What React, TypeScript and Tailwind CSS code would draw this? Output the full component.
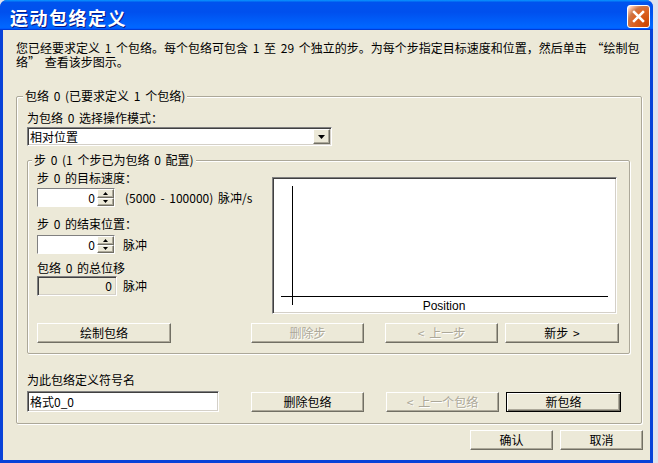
import clsx from 'clsx'

const sunken =
    'border border-t-[#808080] border-l-[#808080] border-b-white border-r-white shadow-[inset_1px_1px_0_#404040,inset_-1px_-1px_0_#d4d0c8]'
const raised =
    'bg-[#ece9d8] border border-t-white border-l-white border-b-[#716f64] border-r-[#716f64] shadow-[inset_-1px_-1px_0_#aca899]'

type BtnProps = { label: string; w: string; disabled?: boolean; isDefault?: boolean; className?: string }

const Btn = ({ label, w, disabled, isDefault, className }: BtnProps) => (
    <div
        className={clsx(
            'h-[20px] shrink-0 flex items-center justify-center leading-none',
            w,
            isDefault
                ? 'bg-[#ece9d8] border border-black shadow-[inset_1px_1px_0_#fff,inset_-1px_-1px_0_#716f64,inset_-2px_-2px_0_#aca899]'
                : raised,
            disabled && 'text-[#aca899] [text-shadow:1px_1px_0_#fff]',
            className
        )}
    >
        {label}
    </div>
)

const Arrow = ({ up }: { up?: boolean }) => (
    <svg width="5" height="3" viewBox="0 0 5 3">
        <path d={up ? 'M2.5 0 L5 3 L0 3 Z' : 'M0 0 L5 0 L2.5 3 Z'} fill="#000" />
    </svg>
)

const Spin = ({ value }: { value: string }) => (
    <div className={clsx('h-[19px] w-[78px] flex', sunken)}>
        <div className="flex-1 bg-white text-right pr-[2px] leading-[17px]">{value}</div>
        <div className="w-[17px] flex flex-col">
            <div className={clsx('flex-1 flex items-center justify-center', raised)}>
                <Arrow up />
            </div>
            <div className={clsx('flex-1 flex items-center justify-center', raised)}>
                <Arrow />
            </div>
        </div>
    </div>
)

const Chart = () => (
    <div className={clsx('w-[345px] h-[137px] mt-[6px] bg-white', sunken)}>
        <svg width="343" height="135" viewBox="0 0 343 135" shapeRendering="crispEdges">
            <line x1="19.5" y1="8" x2="19.5" y2="127" stroke="#000" strokeWidth="1" />
            <line x1="8" y1="118.5" x2="335" y2="118.5" stroke="#000" strokeWidth="1" />
            <text
                x="171"
                y="132"
                textAnchor="middle"
                fontSize="12"
                fontFamily="'Liberation Sans', Arial, sans-serif"
                fill="#000"
            >
                Position
            </text>
        </svg>
    </div>
)

const App = () => {
    return (
        <div className="w-[658px] h-[463px] overflow-hidden bg-[#dfe3ee] font-['Noto_Sans_CJK_SC',sans-serif] text-[12px] text-black [word-spacing:2px]">
            <div className="w-[653px] h-[463px] flex flex-col rounded-t-[7px] bg-[#0842d8] overflow-hidden">
                {/* title bar */}
                <div className="h-[30px] shrink-0 flex items-center pl-[10px] pr-[3px] bg-[linear-gradient(180deg,#0997ff_0%,#0053ee_8%,#0050ee_40%,#0066ff_88%,#0066ff_93%,#005bff_95%,#003dd7_96%,#003dd7_100%)]">
                    <span className="flex-1 text-white text-[18px] font-bold tracking-[1.5px] leading-none pt-[3px] [text-shadow:1px_1px_0_#0a1883]">
                        运动包络定义
                    </span>
                    <div className="w-[23px] h-[23px] mt-[2px] rounded-[3px] border border-white flex items-center justify-center bg-[radial-gradient(circle_at_90%_90%,#cc4600_0%,#dc6527_55%,#cd7546_70%,#ffccb2_90%,#fff_100%)]">
                        <svg width="13" height="13" viewBox="0 0 13 13">
                            <path d="M2 2 L11 11 M11 2 L2 11" stroke="#fff" strokeWidth="2.5" strokeLinecap="square" />
                        </svg>
                    </div>
                </div>

                {/* body */}
                <div className="flex-1 mx-[3px] mb-[3px] bg-[#ece9d8] flex flex-col pl-[13px] pr-[7px]">
                    <div className="mt-[11px] whitespace-nowrap">
                        <div className="leading-[14px]">
                            您已经要求定义 1 个包络。每个包络可包含 1 至 29 个独立的步。为每个步指定目标速度和位置，然后单击 “绘制包
                        </div>
                        <div className="leading-[14px]">络” 查看该步图示。</div>
                    </div>

                    <fieldset className="mt-[20px] w-[626px] h-[335px] p-0 min-w-0 border border-[#aca899] rounded-[2px] shadow-[inset_1px_1px_0_#fff,1px_1px_0_#fff]">
                        <legend className="ml-[6px] px-[2px] leading-[14px] bg-[#ece9d8]">包络 0 (已要求定义 1 个包络)</legend>
                        <div className="pl-[10px] flex flex-col">
                            <div className="mt-[8px] leading-[14px]">为包络 0 选择操作模式：</div>
                            <div className={clsx('mt-[2px] h-[19px] w-[305px] flex items-center bg-white pr-[1px]', sunken)}>
                                <span className="flex-1 pl-[2px] leading-none">相对位置</span>
                                <div className={clsx('w-[17px] h-[15px] flex items-center justify-center', raised)}>
                                    <svg width="7" height="4" viewBox="0 0 7 4">
                                        <path d="M0 0 L7 0 L3.5 4 Z" fill="#000" />
                                    </svg>
                                </div>
                            </div>

                            <fieldset className="mt-[7px] w-[603px] h-[201px] p-0 min-w-0 border border-[#aca899] rounded-[2px] shadow-[inset_1px_1px_0_#fff,1px_1px_0_#fff]">
                                <legend className="ml-[4px] px-[2px] leading-[14px] bg-[#ece9d8]">步 0 (1 个步已为包络 0 配置)</legend>
                                <div className="pl-[9px] flex flex-col">
                                    <div className="mt-[4px] flex">
                                        <div className="w-[235px] flex flex-col">
                                            <div className="leading-[14px]">步 0 的目标速度：</div>
                                            <div className="mt-[3px] flex items-center">
                                                <Spin value="0" />
                                                <span className="ml-[10px] leading-none">(5000 - 100000) 脉冲/s</span>
                                            </div>
                                            <div className="mt-[10px] leading-[14px]">步 0 的结束位置：</div>
                                            <div className="mt-[4px] flex items-center">
                                                <Spin value="0" />
                                                <span className="ml-[8px] leading-none">脉冲</span>
                                            </div>
                                            <div className="mt-[7px] leading-[14px]">包络 0 的总位移</div>
                                            <div className="mt-[1px] flex items-center">
                                                <div className={clsx('h-[20px] w-[80px] text-right pr-[4px] leading-[18px] bg-[#ece9d8]', sunken)}>
                                                    0
                                                </div>
                                                <span className="ml-[6px] leading-none">脉冲</span>
                                            </div>
                                        </div>
                                        <Chart />
                                    </div>
                                    <div className="mt-[9px] flex">
                                        <Btn label="绘制包络" w="w-[134px]" />
                                        <Btn label="删除步" w="w-[113px]" disabled className="ml-[80px]" />
                                        <Btn label="< 上一步" w="w-[113px]" disabled className="ml-[21px]" />
                                        <Btn label="新步 >" w="w-[114px]" className="ml-[7px]" />
                                    </div>
                                </div>
                            </fieldset>

                            <div className="mt-[19px] leading-[14px]">为此包络定义符号名</div>
                            <div className="mt-[4px] flex items-start">
                                <div className={clsx('h-[21px] w-[192px] bg-white pl-[2px] leading-[19px]', sunken)}>格式0_0</div>
                                <Btn label="删除包络" w="w-[113px]" className="ml-[32px] mt-[1px]" />
                                <Btn label="< 上一个包络" w="w-[113px]" disabled className="ml-[22px] mt-[1px]" />
                                <Btn label="新包络" w="w-[115px]" isDefault className="ml-[7px] mt-[1px]" />
                            </div>
                        </div>
                    </fieldset>

                    <div className="mt-[6px] flex justify-end gap-[7px]">
                        <Btn label="确认" w="w-[83px]" />
                        <Btn label="取消" w="w-[83px]" />
                    </div>
                </div>
            </div>
        </div>
    )
}

export default App
